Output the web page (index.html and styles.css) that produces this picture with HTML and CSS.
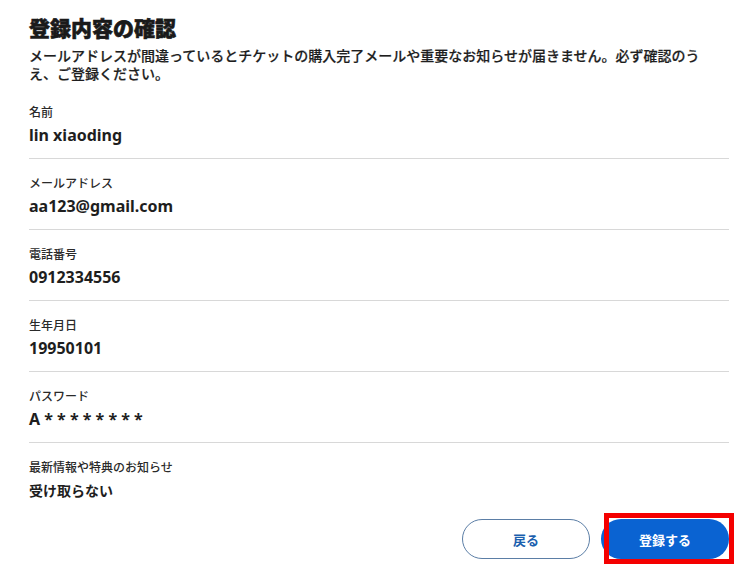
FILE: index.html
```html
<!DOCTYPE html>
<html lang="ja">
<head>
<meta charset="utf-8">
<title>登録内容の確認</title>
<link rel="stylesheet" href="styles.css">
</head>
<body>
<main class="page">
  <h1 class="title">登録内容の確認</h1>
  <p class="lead">メールアドレスが間違っているとチケットの購入完了メールや重要なお知らせが届きません。必ず確認のうえ、ご登録ください。</p>
  <dl class="fields">
    <div class="field">
      <dt class="label">名前</dt>
      <dd class="value">lin xiaoding</dd>
    </div>
    <div class="field">
      <dt class="label">メールアドレス</dt>
      <dd class="value">aa123@gmail.com</dd>
    </div>
    <div class="field">
      <dt class="label">電話番号</dt>
      <dd class="value">0912334556</dd>
    </div>
    <div class="field">
      <dt class="label">生年月日</dt>
      <dd class="value">19950101</dd>
    </div>
    <div class="field">
      <dt class="label">パスワード</dt>
      <dd class="value">A * * * * * * * *</dd>
    </div>
    <div class="field">
      <dt class="label">最新情報や特典のお知らせ</dt>
      <dd class="value value-ja">受け取らない</dd>
    </div>
  </dl>
  <div class="actions">
    <button class="btn btn-back" type="button">戻る</button>
    <div class="submit-wrap">
      <button class="btn btn-submit" type="button">登録する</button>
      <span class="highlight"></span>
    </div>
  </div>
</main>
</body>
</html>
```

FILE: styles.css
```css
* {
  box-sizing: border-box;
}

html, body {
  margin: 0;
  padding: 0;
  background: #ffffff;
}

body {
  min-height: 583px;
  font-family: "Noto Sans", "Noto Sans CJK JP", sans-serif;
  color: #222222;
}

.page {
  width: 700px;
  margin-left: 29px;
  padding-top: 12px;
  padding-bottom: 24px;
}

.title {
  margin: 0;
  font-family: "Noto Sans CJK JP", sans-serif;
  font-size: 21px;
  line-height: 30px;
  font-weight: 900;
  color: #1a1a1a;
  -webkit-text-stroke: 0.6px #1a1a1a;
}

.lead {
  margin: 4px 0 0;
  max-width: 680px;
  font-family: "Noto Sans CJK JP", sans-serif;
  font-size: 14px;
  line-height: 18px;
  font-weight: 500;
  color: #1e1e1e;
  -webkit-text-stroke: 0.2px #1e1e1e;
}

.fields {
  margin: 6px 0 0;
  padding: 0;
}

.field {
  padding: 15px 0 11px;
  border-bottom: 1px solid #d8d8d8;
}

.field:last-child {
  border-bottom: none;
}

.label {
  margin: 0;
  font-family: "Noto Sans CJK JP", sans-serif;
  font-size: 12px;
  line-height: 18px;
  font-weight: 500;
  color: #2a2a2a;
}

.value {
  margin: 2px 0 0;
  font-family: "Noto Sans", "Noto Sans CJK JP", sans-serif;
  font-size: 16px;
  line-height: 24px;
  font-weight: 700;
  color: #1e1e1e;
}

.value-ja {
  font-family: "Noto Sans CJK JP", sans-serif;
  font-size: 14px;
}

.actions {
  margin-top: 6px;
  display: flex;
  align-items: flex-start;
  justify-content: flex-end;
  gap: 11px;
}

.btn {
  width: 128px;
  height: 40px;
  margin: 0;
  padding: 0;
  border-radius: 20px;
  font-family: "Noto Sans CJK JP", sans-serif;
  font-size: 13px;
  font-weight: 700;
  cursor: pointer;
}

.btn-back {
  background: #ffffff;
  border: 1px solid #5b7ea6;
  color: #1b5fae;
}

.btn-submit {
  display: block;
  background: #0a63d2;
  border: none;
  color: #ffffff;
}

.submit-wrap {
  position: relative;
  width: 128px;
  height: 40px;
}

.highlight {
  position: absolute;
  top: -6px;
  left: 3px;
  width: 130px;
  height: 51px;
  border: 5px solid #f40000;
  pointer-events: none;
}
```
